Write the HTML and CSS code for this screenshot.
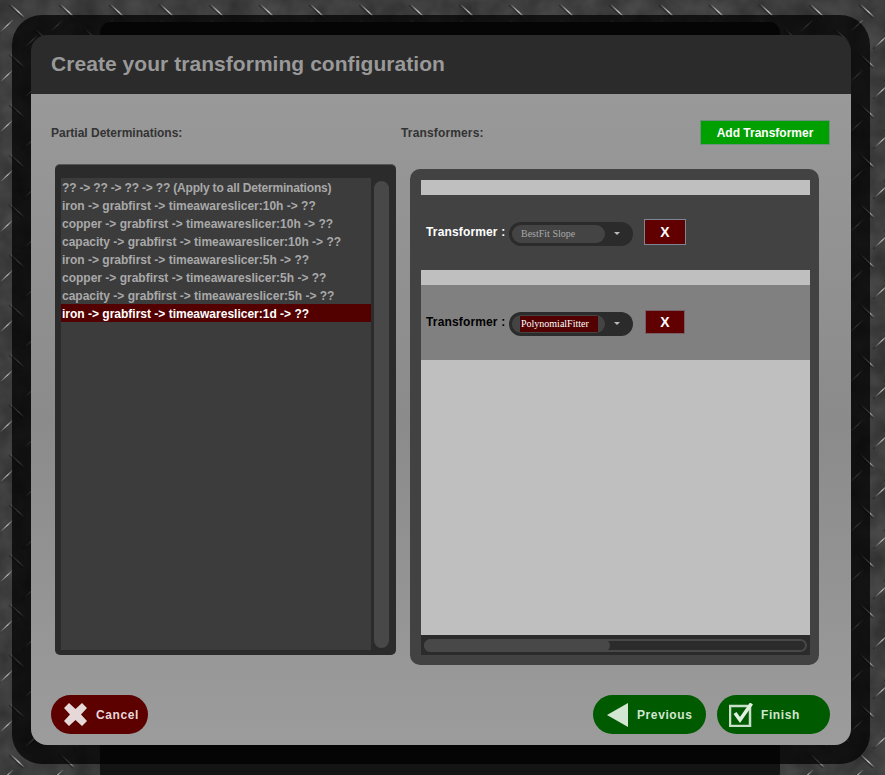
FILE: index.html
```html
<!DOCTYPE html>
<html lang="en">
<head>
    <meta charset="UTF-8">
    <title>Create your transforming configuration</title>
    <link rel="stylesheet" href="styles.css">
</head>
<body>
    <svg class="plate" width="885" height="775">
        <defs>
            <linearGradient id="streak-a" x1="0" y1="0" x2="1" y2="1">
                <stop offset="0" stop-color="#fff" stop-opacity="0"/>
                <stop offset="0.6" stop-color="#fff" stop-opacity="0.7"/>
                <stop offset="1" stop-color="#fff" stop-opacity="0.1"/>
            </linearGradient>
            <linearGradient id="streak-b" x1="1" y1="0" x2="0" y2="1">
                <stop offset="0" stop-color="#fff" stop-opacity="0.1"/>
                <stop offset="0.4" stop-color="#fff" stop-opacity="0.65"/>
                <stop offset="1" stop-color="#fff" stop-opacity="0"/>
            </linearGradient>
            <pattern id="tread" width="50" height="50" patternUnits="userSpaceOnUse">
                <g stroke="#1c1c1c" stroke-opacity="0.45" stroke-width="2" fill="none">
                    <path d="M9 5l14 13"/>
                    <path d="M34 30l14 13"/>
                    <path d="M12 21l-14 13"/>
                    <path d="M37 36l-14 13"/>
                </g>
                <g stroke-width="1.300" fill="none">
                    <path d="M10 4l14 13" stroke="url(#streak-a)"/>
                    <path d="M35 29l14 13" stroke="url(#streak-a)"/>
                    <path d="M13 20l-14 13" stroke="url(#streak-b)"/>
                    <path d="M38 35l-14 13" stroke="url(#streak-b)"/>
                </g>
            </pattern>
            <filter id="mottle" x="0" y="0" width="100%" height="100%">
                <feTurbulence type="fractalNoise" baseFrequency="0.04" numOctaves="3" seed="4"/>
                <feColorMatrix values="0 0 0 0 0  0 0 0 0 0  0 0 0 0 0  0.5 0 0 0 -0.1"/>
            </filter>
        </defs>
        <rect width="885" height="775" fill="#484848"/>
        <rect width="885" height="775" filter="url(#mottle)"/>
        <rect width="885" height="775" fill="url(#tread)"/>
        <rect x="100" y="22" width="680" height="760" rx="10" fill="#141414"/>
    </svg>
    <div class="frame">
        <div class="dialog">
            <div class="dialog-head">Create your transforming configuration</div>
            <div class="dialog-body">
                <div class="columns">
                    <div class="col-left">
                        <div class="col-title">Partial Determinations:</div>
                        <div class="list-panel">
                            <ul class="list">
                                <li class="all">?? -&gt; ?? -&gt; ?? -&gt; ?? (Apply to all Determinations)</li>
                                <li>iron -&gt; grabfirst -&gt; timeawareslicer:10h -&gt; ??</li>
                                <li>copper -&gt; grabfirst -&gt; timeawareslicer:10h -&gt; ??</li>
                                <li>capacity -&gt; grabfirst -&gt; timeawareslicer:10h -&gt; ??</li>
                                <li>iron -&gt; grabfirst -&gt; timeawareslicer:5h -&gt; ??</li>
                                <li>copper -&gt; grabfirst -&gt; timeawareslicer:5h -&gt; ??</li>
                                <li>capacity -&gt; grabfirst -&gt; timeawareslicer:5h -&gt; ??</li>
                                <li class="selected">iron -&gt; grabfirst -&gt; timeawareslicer:1d -&gt; ??</li>
                            </ul>
                            <div class="vscroll"></div>
                        </div>
                    </div>
                    <div class="col-right">
                        <div class="right-head">
                            <div class="col-title">Transformers:</div>
                            <button class="add-btn">Add Transformer</button>
                        </div>
                        <div class="trans-panel">
                            <div class="trans-list">
                                <div class="trans-row">
                                    <span class="trans-label">Transformer :</span>
                                    <div class="select"><span class="select-value"><span>BestFit Slope</span></span><i class="select-arrow"></i></div>
                                    <button class="x-btn">X</button>
                                </div>
                                <div class="trans-row active">
                                    <span class="trans-label">Transformer :</span>
                                    <div class="select"><span class="select-value"><span>PolynomialFitter</span></span><i class="select-arrow"></i></div>
                                    <button class="x-btn">X</button>
                                </div>
                            </div>
                            <div class="hscroll"><div class="hscroll-track"><div class="hscroll-thumb"></div></div></div>
                        </div>
                    </div>
                </div>
                <div class="actions">
                    <button class="pill red">
                        <svg width="23" height="23" viewBox="0 0 23 23"><path d="M5 0l6.500 6 6.500-6 5 5-6 6.500 6 6.500-5 5-6.500-6-6.500 6-5-5 6-6.500-6-6.500z" fill="#e6d8d8"/></svg>
                        Cancel
                    </button>
                    <div class="actions-right">
                        <button class="pill green prev">
                            <svg width="21" height="24" viewBox="0 0 21 24"><path d="M21 0v24L0 12z" fill="#d2e6d2"/></svg>
                            Previous
                        </button>
                        <button class="pill green finish">
                            <svg width="24" height="24" viewBox="0 0 24 24">
                                <rect x="1" y="3" width="20" height="20" fill="none" stroke="#c8dfc8" stroke-width="2.500"/>
                                <path d="M6 10l5 7L22.500 0.500" fill="none" stroke="#e2f0e2" stroke-width="3.600"/>
                            </svg>
                            Finish
                        </button>
                    </div>
                </div>
            </div>
        </div>
    </div>
</body>
</html>
```
FILE: styles.css
```css
* {
    box-sizing: border-box;
}
html, body {
    margin: 0;
    padding: 0;
    height: 775px;
    overflow: hidden;
}
body {
    font-family: "Liberation Sans", Arial, sans-serif;
    background: #3c3c3c;
    padding: 15px 0 0 12px;
}
.plate {
    position: absolute;
    top: 0;
    left: 0;
}
.frame {
    position: relative;
    width: 858px;
    height: 749px;
    padding: 20px 19px;
    background: rgba(0, 0, 0, 0.72);
    border-radius: 30px;
}
.dialog {
    width: 820px;
    height: 710px;
    border-radius: 16px;
    overflow: hidden;
    display: flex;
    flex-direction: column;
}
.dialog-head {
    height: 59px;
    padding: 17px 20px 0;
    background: #2b2b2b;
    color: #999;
    font-size: 21px;
    font-weight: bold;
    letter-spacing: 0.05px;
}
.dialog-body {
    flex: 1;
    padding: 26px 21px 11px 20px;
    background: linear-gradient(to bottom, #999 0%, #8b8b8b 50%, #9c9c9c 100%);
    display: flex;
    flex-direction: column;
    justify-content: space-between;
}
.columns {
    display: flex;
}
.col-left {
    width: 350px;
}
.col-title {
    height: 25px;
    font-size: 12px;
    font-weight: bold;
    color: #333;
    line-height: 27px;
}
.right-head .col-title {
    letter-spacing: 0.15px;
}
.list-panel {
    margin: 19px 0 0 4px;
    width: 341px;
    height: 491px;
    padding: 14px 6px 5px 6px;
    background: #2b2b2b;
    border-radius: 5px;
    border-top: 1px solid #555;
    display: flex;
}
.list {
    list-style: none;
    margin: -1px 0 0;
    padding: 0;
    width: 310px;
    background: #3c3c3c;
}
.list li {
    height: 18px;
    line-height: 20px;
    padding-left: 1px;
    font-size: 12px;
    font-weight: bold;
    color: #a9a9a9;
    white-space: nowrap;
}
.list li.all {
    letter-spacing: -0.18px;
}
.list li.selected {
    background: #520000;
    color: #fff;
}
.vscroll {
    width: 15px;
    margin: 2px 0 2px 3px;
    background: #484848;
    border-radius: 8px;
}
.col-right {
    width: 429px;
}
.right-head {
    display: flex;
    justify-content: space-between;
    align-items: center;
}
.add-btn {
    width: 130px;
    height: 25px;
    padding: 0;
    margin-right: 0;
    background: #00a000;
    border: 1px solid #6f8f80;
    color: #fff;
    font: bold 12px "Liberation Sans", Arial, sans-serif;
}
.trans-panel {
    margin: 24px 0 0 9px;
    width: 409px;
    height: 496px;
    padding: 11px 9px 0 11px;
    background: #424242;
    border-radius: 10px;
}
.trans-list {
    height: 455px;
    padding-top: 15px;
    background: #bfbfbf;
}
.trans-row {
    height: 75px;
    margin-bottom: 15px;
    padding-left: 5px;
    background: #424242;
    display: flex;
    align-items: center;
}
.trans-row.active {
    background: #808080;
}
.trans-label {
    width: 83px;
    margin-top: -1px;
    font-size: 12px;
    font-weight: bold;
    letter-spacing: 0.15px;
    color: #fff;
    white-space: nowrap;
}
.active .trans-label {
    color: #000;
}
.select {
    width: 124px;
    height: 24px;
    margin-top: 2px;
    padding: 3px;
    background: #2b2b2b;
    border-radius: 12px;
    display: flex;
    align-items: center;
}
.select-value {
    width: 93px;
    height: 18px;
    padding-left: 9px;
    background: #444;
    border-radius: 9px;
    display: flex;
    align-items: center;
    font-family: "Liberation Serif", serif;
    font-size: 10px;
    color: #aaa;
}
.active .select-value {
    padding-left: 8px;
    color: #fff;
}
.active .select-value span {
    width: 78px;
    padding-left: 1px;
    line-height: 16px;
    background: #520000;
}
.select-arrow {
    margin-left: 9px;
    border: 3px solid transparent;
    border-top: 3px solid #bbb;
    border-bottom: 0;
}
.x-btn {
    width: 42px;
    height: 26px;
    margin: -1px 0 0 11px;
    padding: 0;
    background: #600000;
    border: 1px solid #7b8792;
    color: #fff;
    font: bold 14px "Liberation Sans", Arial, sans-serif;
}
.active .x-btn {
    width: 40px;
    height: 24px;
    margin-left: 12px;
    border-color: #75606a;
}
.hscroll {
    height: 20px;
    padding: 4px 3px 3px;
    background: #2b2b2b;
}
.hscroll-track {
    height: 13px;
    background: #2b2b2b;
    border: 2px solid #484848;
    border-radius: 7px;
    position: relative;
}
.hscroll-thumb {
    position: absolute;
    top: -2px;
    left: -2px;
    width: 186px;
    height: 13px;
    background: #484848;
    border-radius: 7px;
}
.actions {
    display: flex;
    justify-content: space-between;
}
.actions-right {
    display: flex;
    gap: 11px;
}
.pill {
    height: 39px;
    border: 0;
    border-radius: 20px;
    display: flex;
    align-items: center;
    font: bold 12px "Liberation Sans", Arial, sans-serif;
    letter-spacing: 0.6px;
    padding: 0;
}
.pill svg {
    flex: none;
}
.red {
    width: 97px;
    padding-left: 13px;
    gap: 9px;
    background: #5c0000;
    color: #e6d8d8;
}
.green {
    width: 113px;
    background: #005a00;
    color: #d2e6d2;
}
.prev {
    padding-left: 14px;
    gap: 9px;
}
.finish {
    padding-left: 12px;
    gap: 8px;
}
```
